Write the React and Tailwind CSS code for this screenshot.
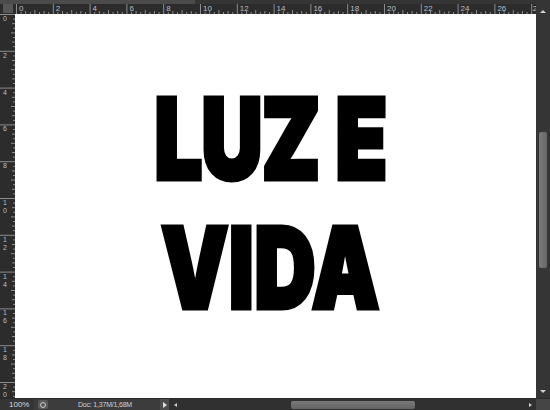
import React from "react";

function HRuler() {
  const w = 521;
  const step = 18.4;
  const ticks = [];
  const labels = [];
  for (let q = 0; q <= 112; q++) {
    const x = 1 + (q * step) / 4;
    if (x > w) break;
    let h = 2;
    if (q % 8 === 0) h = 10;
    else if (q % 4 === 0) h = 4;
    else if (q % 2 === 0) h = 3;
    ticks.push(<line key={q} x1={x + 0.5} x2={x + 0.5} y1={10 - h} y2={10} stroke="#8c8c8c" strokeWidth="1" />);
    if (q % 8 === 0) {
      const v = q / 4;
      labels.push(
        <text key={"l" + q} x={v === 28 ? x + 1.5 : x + 3} y={7} fontSize="8" fill="#b3bfcc" fontFamily="Liberation Sans, Arial, sans-serif">
          {v === 28 ? "2" : v}
        </text>
      );
    }
  }
  return (
    <svg width={w} height={10} className="block">
      {ticks}
      {labels}
    </svg>
  );
}

function VRuler() {
  const h = 384;
  const step = 18.4;
  const ticks = [];
  const labels = [];
  for (let q = 0; q <= 100; q++) {
    const y = (q * step) / 4;
    if (y > h) break;
    let l = 2;
    if (q % 8 === 0) l = 15;
    else if (q % 4 === 0) l = 4;
    else if (q % 2 === 0) l = 3;
    ticks.push(<line key={q} y1={y + 0.5} y2={y + 0.5} x1={15 - l} x2={15} stroke="#8c8c8c" strokeWidth="1" />);
    if (q % 8 === 0) {
      const s = String(q / 4).split("");
      s.forEach((d, i) => {
        labels.push(
          <text key={"l" + q + "_" + i} x={3} y={y + 7 + i * 8} fontSize="7" fill="#b3bfcc" fontFamily="Liberation Sans, Arial, sans-serif">
            {d}
          </text>
        );
      });
    }
  }
  return (
    <svg width={15} height={h} className="block">
      {ticks}
      {labels}
    </svg>
  );
}

export default function App() {
  return (
    <div className="w-[550px] h-[410px] bg-[#3a3a3a] flex flex-col overflow-hidden font-['Liberation_Sans',Arial,sans-serif]">
      <div className="h-[4px] flex">
        <div className="w-[195px] bg-[#4b4b4b]" />
        <div className="flex-1 bg-[#353535]" />
      </div>
      <div className="flex-1 flex min-h-0">
        <div className="flex-1 flex flex-col min-w-0">
          <div className="h-[10px] flex bg-[#2c2c2c]">
            <div className="w-[15px] flex items-start justify-end pr-[2px] pt-0">
              <div className="w-[10px] h-[9px] bg-[#575757]" />
            </div>
            <HRuler />
          </div>
          <div className="flex-1 flex min-h-0">
            <div className="w-[15px] bg-[#2c2c2c]">
              <VRuler />
            </div>
            <div className="flex-1 bg-white flex flex-col items-center pt-[60px] pr-[9px]">
              <div className="font-['Inter',sans-serif] font-black text-[111px] leading-[129px] text-black tracking-[-1px] scale-x-[0.76] text-center [-webkit-text-stroke:5px_black]">
                <div>LUZ E</div>
                <div className="tracking-[1px]">VIDA</div>
              </div>
            </div>
          </div>
        </div>
        <div className="w-[14px] bg-[#353535] flex flex-col items-center">
          <div className="h-[14px] flex items-center justify-center">
            <div className="w-0 h-0 border-l-[3px] border-r-[3px] border-b-[3px] border-l-transparent border-r-transparent border-b-[#d0d0d0]" />
          </div>
          <div className="h-[114px]" />
          <div className="w-[8px] h-[136px] rounded-[2px] bg-gradient-to-r from-[#7a7a7a] to-[#666666]" />
          <div className="flex-1" />
          <div className="h-[14px] flex items-center justify-center">
            <div className="w-0 h-0 border-l-[3px] border-r-[3px] border-t-[3px] border-l-transparent border-r-transparent border-t-[#d0d0d0]" />
          </div>
        </div>
      </div>
      <div className="h-[12px] flex bg-[#3c3c3c] border-t border-[#2a2a2a]">
        <div className="w-[160px] flex items-center text-[8px] text-[#d8d8d8] leading-none">
          <div className="w-[34px] h-full bg-[#353535] flex items-center pl-[9px]">100%</div>
          <div className="w-[10px] h-[9px] ml-[4px] rounded-[2px] bg-[#5a5a5a] flex items-center justify-center">
            <div className="w-[6px] h-[6px] rounded-full border border-[#c8c8c8]" />
          </div>
          <div className="ml-[30px] text-[7px] tracking-[-0.2px] text-[#d0d0d0]">Doc: 1,37M/1,68M</div>
        </div>
        <div className="w-[9px] h-full bg-[#4c4c4c] flex items-center justify-center">
          <div className="w-0 h-0 border-t-[3px] border-b-[3px] border-l-[4px] border-t-transparent border-b-transparent border-l-[#e0e0e0]" />
        </div>
        <div className="flex-1 bg-[#303030] flex items-center">
          <div className="w-[12px] flex justify-center">
            <div className="w-0 h-0 border-t-[2px] border-b-[2px] border-r-[3px] border-t-transparent border-b-transparent border-r-[#d0d0d0]" />
          </div>
          <div className="w-[110px]" />
          <div className="w-[124px] h-[8px] rounded-[2px] bg-gradient-to-b from-[#7a7a7a] to-[#646464]" />
          <div className="flex-1" />
          <div className="w-[12px] flex justify-center">
            <div className="w-0 h-0 border-t-[2px] border-b-[2px] border-l-[3px] border-t-transparent border-b-transparent border-l-[#d0d0d0]" />
          </div>
        </div>
        <div className="w-[14px] bg-[#454545]" />
      </div>
    </div>
  );
}
